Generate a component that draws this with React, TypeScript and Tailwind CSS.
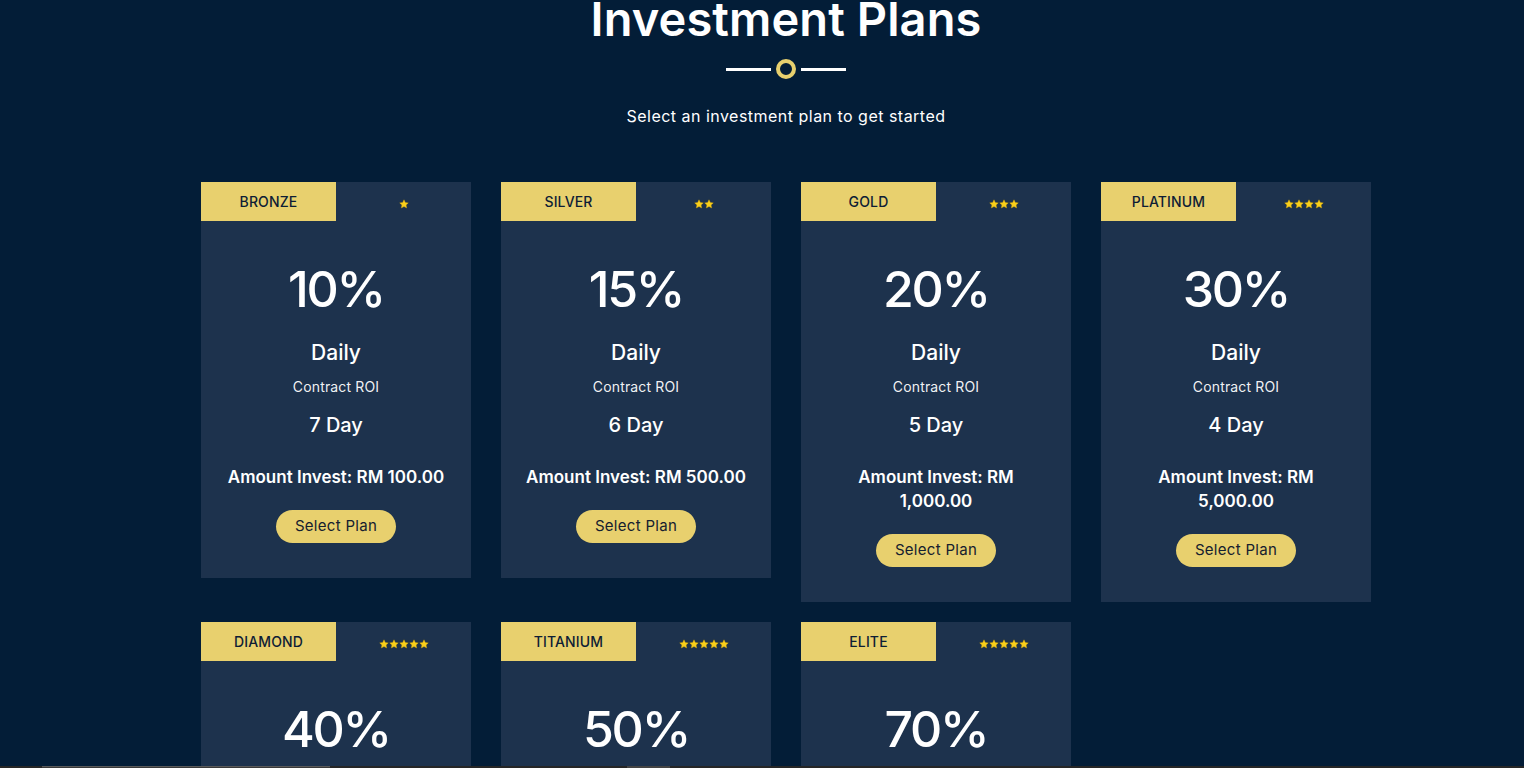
import React from "react";

type Plan = {
  name: string;
  stars: number;
  rate: string;
  days: string;
  amount: string;
};

const plans: Plan[] = [
  { name: "Bronze", stars: 1, rate: "10%", days: "7 Day", amount: "RM 100.00" },
  { name: "Silver", stars: 2, rate: "15%", days: "6 Day", amount: "RM 500.00" },
  { name: "Gold", stars: 3, rate: "20%", days: "5 Day", amount: "RM 1,000.00" },
  { name: "Platinum", stars: 4, rate: "30%", days: "4 Day", amount: "RM 5,000.00" },
  { name: "Diamond", stars: 5, rate: "40%", days: "3 Day", amount: "RM 10,000.00" },
  { name: "Titanium", stars: 5, rate: "50%", days: "2 Day", amount: "RM 20,000.00" },
  { name: "Elite", stars: 5, rate: "70%", days: "1 Day", amount: "RM 50,000.00" },
];

function Star() {
  return (
    <svg width="10" height="10" viewBox="0 0 24 24" className="shrink-0">
      <path
        d="M12 1.8l3.1 6.6 7.2.9-5.3 5 1.4 7.1L12 17.9l-6.4 3.5 1.4-7.1-5.3-5 7.2-.9z"
        fill="#f9cf1b"
        stroke="#d9a70a"
        strokeWidth="1"
      />
    </svg>
  );
}

function PlanCard({ plan }: { plan: Plan }) {
  return (
    <div className="flex flex-col bg-[#1d324d] pb-[35px] text-center text-white">
      <div className="grid h-[39px] grid-cols-2">
        <div className="flex items-center justify-center bg-[#e8d06e] text-[14px] font-medium uppercase tracking-[0.01em] text-[#0e1d35]">
          {plan.name}
        </div>
        <div className="flex items-center justify-center pt-[4px]">
          {Array.from({ length: plan.stars }).map((_, i) => (
            <Star key={i} />
          ))}
        </div>
      </div>
      <div className="mt-[34px] text-[50px] font-medium leading-[68px] tracking-[-0.045em]">{plan.rate}</div>
      <div className="mt-[17px] text-[21px] font-medium leading-[26px]">Daily</div>
      <div className="mt-[12px] text-[14px] leading-[18px] tracking-[0.01em] text-white/95">Contract ROI</div>
      <div className="mt-[16px] text-[20px] font-medium leading-[26px]">{plan.days}</div>
      <div className="mx-auto mt-[27px] max-w-[232px] text-[17px] font-semibold leading-[24px]">
        Amount Invest: {plan.amount}
      </div>
      <div className="mt-[21px] flex justify-center">
        <button className="h-[33px] w-[120px] rounded-full bg-[#e8d06e] text-[15px] tracking-[0.02em] text-[#15202f]">
          Select Plan
        </button>
      </div>
    </div>
  );
}

export default function App() {
  return (
    <div
      className="min-h-screen overflow-hidden bg-[#031d37] pl-[48px]"
      style={{ fontFamily: "Inter, 'Noto Sans', sans-serif" }}
    >
      <div className="mx-auto w-[1170px]">
        <h1 className="-mt-[7px] text-center text-[47px] font-semibold leading-[52px] tracking-[0.002em] text-white">
          Investment Plans
        </h1>
        <div className="mt-[14px] flex items-center justify-center gap-[5px]">
          <div className="h-[3px] w-[45px] bg-white" />
          <div className="h-[20px] w-[20px] rounded-full border-[4px] border-[#e8d06e]" />
          <div className="h-[3px] w-[45px] bg-white" />
        </div>
        <p className="mt-[25px] text-center text-[16px] tracking-[0.03em] text-white">
          Select an investment plan to get started
        </p>
        <div className="mt-[54px] grid grid-cols-4 items-start gap-x-[30px] gap-y-[20px]">
          {plans.map((p) => (
            <PlanCard key={p.name} plan={p} />
          ))}
        </div>
      </div>
      <div className="fixed bottom-0 left-0 right-0 flex h-[2px] bg-[#262626]">
        <div className="ml-[42px] w-[288px] border-t border-[#5a5a5a] bg-[#3a3a3a]" />
        <div className="ml-[297px] w-[43px] bg-[#444444]" />
      </div>
    </div>
  );
}
